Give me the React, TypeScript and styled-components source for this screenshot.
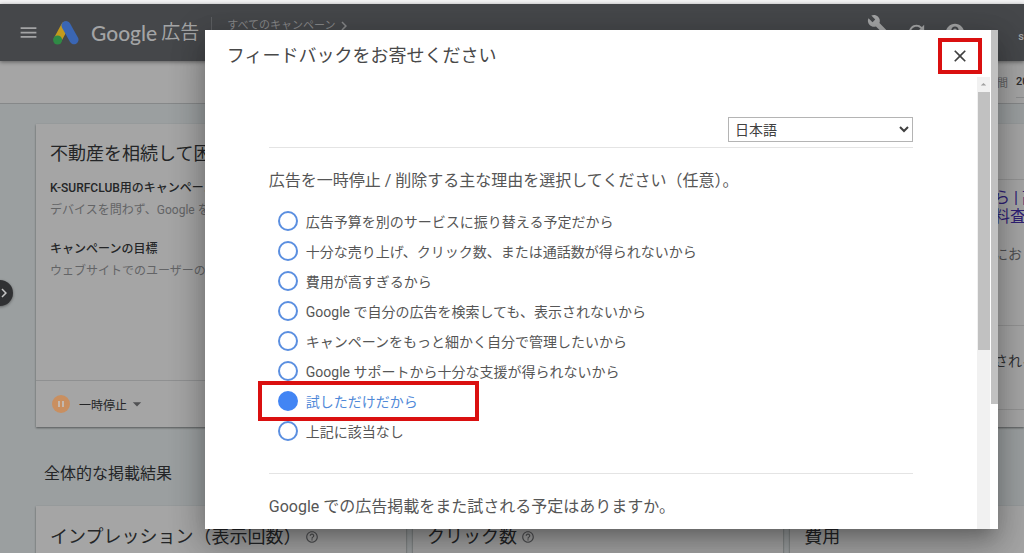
import React, { useState } from "react";
import styled, { createGlobalStyle, css } from "styled-components";
import { MdBuild, MdRefresh, MdHelp, MdHelpOutline, MdMenu, MdArrowDropDown, MdArrowDropUp, MdClose, MdChevronRight } from "react-icons/md";

const GlobalStyle = createGlobalStyle`
  *, *::before, *::after { box-sizing: border-box; }
  body {
    margin: 0;
    font-family: Roboto, "Noto Sans CJK JP", sans-serif;
    color: #242527;
    background: #9b9e9f;
  }
  h1, h2, h3, p { margin: 0; font-weight: 400; }
  button { font: inherit; color: inherit; background: none; border: 0; padding: 0; cursor: pointer; }
`;

const Shell = styled.div`
  display: flex;
  flex-direction: column;
  height: 100vh;
  overflow: hidden;
`;

const TopStrip = styled.div`
  flex: 0 0 4px;
  background: #f2f2f3;
`;

const Stage = styled.div`
  position: relative;
  flex: 1;
  display: flex;
  flex-direction: column;
  min-height: 0;
`;

const Header = styled.header`
  flex: 0 0 57px;
  display: flex;
  align-items: center;
  padding-left: 18px;
  background: #45474a;
  color: #a3a4a5;
  box-shadow: 0 1px 4px rgba(0, 0, 0, 0.45);
  z-index: 1;
`;

const IconButton = styled.button`
  display: flex;
`;

const Logo = styled.svg`
  width: 28px;
  height: 26px;
  margin: 0 11px 0 13px;
`;

const Brand = styled.h1`
  display: flex;
  align-items: center;
  gap: 4px;
  font-size: 19px;
  line-height: 28px;
  white-space: nowrap;
`;

const BrandName = styled.span`
  font-family: Lato, sans-serif;
  font-size: 21px;
  font-weight: 500;
`;

const Crumb = styled.a`
  align-self: flex-start;
  display: flex;
  align-items: center;
  margin: 13px 0 0 12px;
  padding-left: 15px;
  border-left: 1px solid #5c5e61;
  color: #858688;
  font-size: 11px;
  line-height: 16px;
  text-decoration: none;
  white-space: nowrap;
`;

const Tools = styled.nav`
  display: flex;
  align-items: center;
  align-self: stretch;
  gap: 16px;
  margin-left: auto;
`;

const ToolsButton = styled(IconButton)`
  align-self: flex-start;
  margin-top: 10px;
`;

const Account = styled.span`
  margin-left: 36px;
  font-size: 11px;
  line-height: 16px;
  padding-top: 8px;
  font-weight: 500;
`;

const SubBar = styled.div`
  flex: 0 0 43px;
  display: flex;
  align-items: center;
  justify-content: flex-end;
  gap: 8px;
  background: #a5a5a5;
  border-bottom: 1px solid #868889;
  color: #5f6062;
  font-size: 11px;
`;

const DateValue = styled.span`
  width: 8px;
  color: #2b2c2e;
  font-weight: 500;
  border-bottom: 1px solid #8d8e8f;
  line-height: 30px;
`;

const Content = styled.main`
  flex: 1;
  padding: 20px 0 0 36px;
  background: #9b9fa0;
`;

const card = css`
  background: #a5a5a5;
  box-shadow: 0 1px 2px rgba(0, 0, 0, 0.45);
`;

const CampaignCard = styled.section`
  ${card}
  display: flex;
  height: 303px;
`;

const CampaignMain = styled.div`
  flex: 1;
  display: flex;
  flex-direction: column;
`;

const CampaignBody = styled.div`
  flex: 1;
  padding: 18px 14px 0;
`;

const CardTitle = styled.h2`
  font-size: 18px;
  line-height: 24px;
  margin-bottom: 11px;
`;

const Field = styled.div`
  margin-bottom: 17px;
  font-size: 12px;
  line-height: 22px;
`;

const FieldName = styled.h3`
  font-size: inherit;
  font-weight: 500;
`;

const FieldValue = styled.p`
  color: #636466;
`;

const CampaignFooter = styled.footer`
  display: flex;
  align-items: center;
  height: 47px;
  padding-left: 16px;
  border-top: 1px solid #8f9091;
`;

const StatusButton = styled.button`
  display: flex;
  align-items: center;
  font-size: 12px;
`;

const PauseIcon = styled.svg`
  width: 18px;
  height: 18px;
  margin-right: 9px;
`;

const Preview = styled.aside`
  flex: 0 0 30px;
  min-width: 0;
  display: flex;
  flex-direction: column;
  padding: 55px 0 17px;
  white-space: nowrap;
  font-size: 14px;
`;

const PreviewAd = styled.div`
  height: 147px;
  padding-top: 8px;
  border-top: 1px solid #939393;
  border-bottom: 1px solid #939393;
  color: #505153;
`;

const PreviewLink = styled.a`
  display: block;
  color: #2f2175;
  font-size: 16px;
  line-height: 19px;
  text-decoration: none;
`;

const PreviewText = styled.p`
  margin-top: 18px;
  line-height: 20px;
`;

const PreviewNote = styled.p`
  flex: 1;
  padding-top: 25px;
  border-bottom: 1px solid #939393;
  line-height: 20px;
  color: #303133;
`;

const SectionTitle = styled.h2`
  padding: 35px 8px 20px;
  font-size: 16px;
  line-height: 24px;
`;

const Metrics = styled.div`
  display: grid;
  grid-template-columns: 38fr 38fr 24fr;
  gap: 7px;
`;

const Metric = styled.section`
  ${card}
  display: flex;
  align-items: center;
  gap: 4px;
  height: 120px;
  padding: 0 14px 58px;
`;

const MetricTitle = styled.h3`
  font-size: 18px;
  line-height: 24px;
`;

const HelpIcon = styled(MdHelpOutline)`
  color: #505153;
`;

const DrawerHandle = styled.button`
  position: absolute;
  left: -13px;
  top: 276px;
  display: flex;
  align-items: center;
  justify-content: flex-end;
  width: 26px;
  height: 26px;
  border-radius: 50%;
  background: #303133;
  color: #c4c4c4;
  box-shadow: 0 1px 3px rgba(0, 0, 0, 0.4);
`;

const Overlay = styled.div`
  position: absolute;
  inset: 0;
  z-index: 2;
  display: flex;
  padding: 26px 26px 24px 20%;
`;

const Dialog = styled.div`
  flex: 1;
  display: flex;
  min-width: 0;
  background: #fff;
  color: #565656;
  box-shadow: 0 11px 15px -7px rgba(0, 0, 0, 0.2), 0 20px 34px 3px rgba(0, 0, 0, 0.16),
    0 6px 30px 4px rgba(0, 0, 0, 0.16);
`;

const DialogMain = styled.div`
  flex: 1;
  display: flex;
  flex-direction: column;
  min-width: 0;
`;

const DialogHeader = styled.div`
  display: flex;
  align-items: center;
  justify-content: space-between;
  height: 47px;
  padding: 5px 9px 0 22px;
`;

const DialogTitle = styled.h2`
  font-size: 18px;
  line-height: 28px;
  color: #484848;
`;

const CloseButton = styled.button`
  display: flex;
  align-items: center;
  justify-content: center;
  width: 44px;
  height: 36px;
  border: 4px solid #da1010;
  color: #404040;
`;

const DialogBody = styled.div`
  flex: 1;
  display: flex;
  min-height: 0;
`;

const Form = styled.form`
  flex: 1;
  padding: 40px 64px 0;
  overflow: hidden;
`;

const Language = styled.select`
  display: block;
  width: 185px;
  height: 25px;
  margin: 0 0 5px auto;
  padding: 0 2px;
  border: 1px solid #b4b4b4;
  border-radius: 0;
  background: #fff;
  color: #404040;
  font: 14px Roboto, "Noto Sans CJK JP", sans-serif;
`;

const Question = styled.p`
  padding-top: 21px;
  border-top: 1px solid #e4e4e4;
  font-size: 16px;
  line-height: 24px;
`;

const Options = styled.div`
  margin: 13px 0 27px;
  padding-left: 9px;
`;

const Option = styled.label<{ $checked: boolean }>`
  position: relative;
  display: flex;
  align-items: center;
  gap: 8px;
  width: fit-content;
  height: 30px;
  font-size: 14px;
  color: ${(p) => (p.$checked ? "#5089d8" : "#565656")};
`;

const Radio = styled.input`
  appearance: none;
  width: 20px;
  height: 20px;
  margin: 0;
  border: 2px solid #5b8fe0;
  border-radius: 50%;

  &:checked {
    border-color: #4285f4;
    background: #4285f4;
  }
`;

const Highlight = styled.span`
  position: absolute;
  left: -20px;
  top: -5px;
  width: 221px;
  height: 40px;
  border: 4px solid #da1010;
`;

const ScrollTrack = styled.div`
  flex: 0 0 14px;
  display: flex;
  flex-direction: column;
  align-items: flex-end;
  background: #f1f1f1;
  border-right: 1px solid #fff;
  color: #a0a0a0;
`;

const ScrollUp = styled(MdArrowDropUp)`
  width: 13px;
  height: 15px;
`;

const ScrollThumb = styled.div<{ $width: number; $share: number }>`
  width: ${(p) => p.$width}px;
  height: ${(p) => p.$share}%;
  background: #c1c1c1;
`;

const OuterTrack = styled.div`
  flex: 0 0 7px;
  background: #fff;
`;

const reasons = [
  "広告予算を別のサービスに振り替える予定だから",
  "十分な売り上げ、クリック数、または通話数が得られないから",
  "費用が高すぎるから",
  "Google で自分の広告を検索しても、表示されないから",
  "キャンペーンをもっと細かく自分で管理したいから",
  "Google サポートから十分な支援が得られないから",
  "試しただけだから",
  "上記に該当なし",
];

function FeedbackDialog() {
  const [reason, setReason] = useState(6);
  return (
    <Overlay>
      <Dialog role="dialog" aria-labelledby="feedback-title">
        <DialogMain>
          <DialogHeader>
            <DialogTitle id="feedback-title">フィードバックをお寄せください</DialogTitle>
            <CloseButton type="button" aria-label="閉じる">
              <MdClose size={20} />
            </CloseButton>
          </DialogHeader>
          <DialogBody>
            <Form>
              <Language aria-label="言語">
                <option>日本語</option>
              </Language>
              <Question id="reason-question">
                広告を一時停止 / 削除する主な理由を選択してください（任意）。
              </Question>
              <Options role="radiogroup" aria-labelledby="reason-question">
                {reasons.map((text, i) => (
                  <Option key={text} $checked={i === reason}>
                    <Radio type="radio" name="reason" checked={i === reason} onChange={() => setReason(i)} />
                    {text}
                    {i === reason && <Highlight />}
                  </Option>
                ))}
              </Options>
              <Question>Google での広告掲載をまた試される予定はありますか。</Question>
            </Form>
            <ScrollTrack>
              <ScrollUp />
              <ScrollThumb $width={12} $share={57} />
            </ScrollTrack>
          </DialogBody>
        </DialogMain>
        <OuterTrack>
          <ScrollThumb $width={7} $share={75} />
        </OuterTrack>
      </Dialog>
    </Overlay>
  );
}

export default function App() {
  return (
    <>
      <GlobalStyle />
      <Shell>
        <TopStrip />
        <Stage>
          <Header>
            <IconButton aria-label="メニュー">
              <MdMenu size={21} />
            </IconButton>
            <Logo viewBox="0 0 28 26" aria-hidden="true">
              <path d="M13 6 L6 19" stroke="#c39a1d" strokeWidth="8" strokeLinecap="round" />
              <circle cx="5.6" cy="20" r="4.5" fill="#2f8a45" />
              <path d="M14 5.5 L22 19.8" stroke="#3a66b4" strokeWidth="9" strokeLinecap="round" />
            </Logo>
            <Brand>
              <BrandName>Google</BrandName>
              広告
            </Brand>
            <Crumb href="#campaigns">
              すべてのキャンペーン
              <MdChevronRight size={18} />
            </Crumb>
            <Tools>
              <ToolsButton aria-label="ツール">
                <MdBuild size={22} />
              </ToolsButton>
              <IconButton aria-label="更新">
                <MdRefresh size={23} />
              </IconButton>
              <IconButton aria-label="ヘルプ">
                <MdHelp size={22} />
              </IconButton>
              <Account>s</Account>
            </Tools>
          </Header>
          <SubBar>
            期間
            <DateValue>20</DateValue>
          </SubBar>
          <Content>
            <CampaignCard>
              <CampaignMain>
                <CampaignBody>
                  <CardTitle>不動産を相続して困</CardTitle>
                  <Field>
                    <FieldName>K-SURFCLUB用のキャンペーン</FieldName>
                    <FieldValue>デバイスを問わず、Google を</FieldValue>
                  </Field>
                  <Field>
                    <FieldName>キャンペーンの目標</FieldName>
                    <FieldValue>ウェブサイトでのユーザーの</FieldValue>
                  </Field>
                </CampaignBody>
                <CampaignFooter>
                  <StatusButton>
                    <PauseIcon viewBox="0 0 18 18" aria-hidden="true">
                      <circle cx="9" cy="9" r="9" fill="#c98f60" />
                      <path d="M7 6v6M11 6v6" stroke="#c4b8ae" strokeWidth="2" />
                    </PauseIcon>
                    一時停止
                    <MdArrowDropDown size={20} color="#505153" />
                  </StatusButton>
                </CampaignFooter>
              </CampaignMain>
              <Preview>
                <PreviewAd>
                  <PreviewLink href="#ad">ら | 高</PreviewLink>
                  <PreviewLink href="#ad">料査</PreviewLink>
                  <PreviewText>におく</PreviewText>
                </PreviewAd>
                <PreviewNote>される</PreviewNote>
              </Preview>
            </CampaignCard>
            <SectionTitle>全体的な掲載結果</SectionTitle>
            <Metrics>
              <Metric>
                <MetricTitle>インプレッション（表示回数）</MetricTitle>
                <HelpIcon size={14} />
              </Metric>
              <Metric>
                <MetricTitle>クリック数</MetricTitle>
                <HelpIcon size={14} />
              </Metric>
              <Metric>
                <MetricTitle>費用</MetricTitle>
              </Metric>
            </Metrics>
          </Content>
          <DrawerHandle aria-label="メニューを開く">
            <MdChevronRight size={18} />
          </DrawerHandle>
          <FeedbackDialog />
        </Stage>
      </Shell>
    </>
  );
}
